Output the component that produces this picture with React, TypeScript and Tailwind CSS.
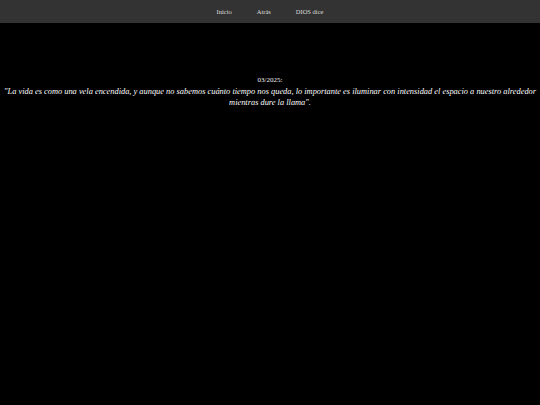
export default function App() {
  const links = ["Inicio", "Atrás", "DIOS dice"];
  return (
    <div className="min-h-[405px] bg-black font-['Liberation_Serif',serif] text-white">
      <nav className="flex h-[23px] items-center justify-center bg-[#333333]">
        {links.map((l) => (
          <a key={l} href="#" className="px-[12.5px] text-[6.5px] text-[#dddddd]">
            {l}
          </a>
        ))}
      </nav>
      <div className="pt-[53px] text-center">
        <p className="text-[7px] leading-[9px] text-[#eeeeee]">03/2025:</p>
        <p className="mt-[1px] text-[8.4px] italic leading-[11px]">
          "La vida es como una vela encendida, y aunque no sabemos cuánto tiempo nos queda, lo importante es iluminar con intensidad el espacio a nuestro alrededor mientras dure la llama".
        </p>
      </div>
    </div>
  );
}
